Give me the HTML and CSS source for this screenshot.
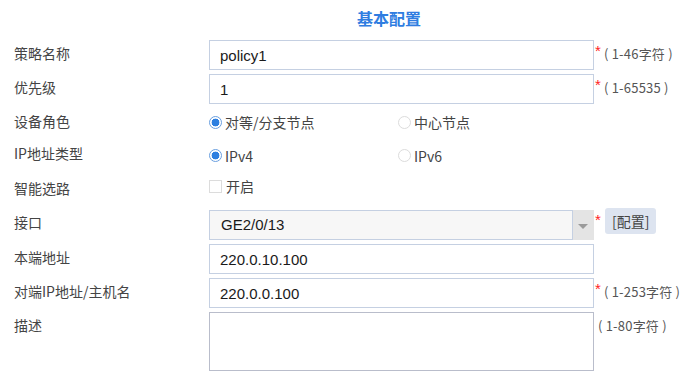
FILE: index.html
```html
<!DOCTYPE html>
<html lang="zh-CN">

<head>
  <meta charset="UTF-8">
  <title>基本配置</title>
  <link rel="stylesheet" href="styles.css">
</head>

<body>
  <h2 class="title">基本配置</h2>
  <div class="form">
    <div class="row">
      <div class="label">策略名称</div>
      <div class="field"><input class="text" type="text" value="policy1"></div>
      <span class="req">*</span><span class="hint">( 1-46字符 )</span>
    </div>
    <div class="row">
      <div class="label">优先级</div>
      <div class="field"><input class="text" type="text" value="1"></div>
      <span class="req">*</span><span class="hint">( 1-65535 )</span>
    </div>
    <div class="row row-radio">
      <div class="label">设备角色</div>
      <div class="field options">
        <label class="opt"><span class="radio on"></span>对等/分支节点</label>
        <label class="opt"><span class="radio"></span>中心节点</label>
      </div>
    </div>
    <div class="row row-radio tall">
      <div class="label">IP地址类型</div>
      <div class="field options">
        <label class="opt"><span class="radio on"></span>IPv4</label>
        <label class="opt"><span class="radio"></span>IPv6</label>
      </div>
    </div>
    <div class="row row-check">
      <div class="label">智能选路</div>
      <div class="field options">
        <label class="opt"><span class="check"></span>开启</label>
      </div>
    </div>
    <div class="row">
      <div class="label">接口</div>
      <div class="field">
        <div class="select">
          <span class="select-value">GE2/0/13</span>
          <span class="select-arrow"></span>
        </div>
      </div>
      <span class="req">*</span><button class="btn">[配置]</button>
    </div>
    <div class="row">
      <div class="label">本端地址</div>
      <div class="field"><input class="text" type="text" value="220.0.10.100"></div>
    </div>
    <div class="row">
      <div class="label">对端IP地址/主机名</div>
      <div class="field"><input class="text" type="text" value="220.0.0.100"></div>
      <span class="req">*</span><span class="hint">( 1-253字符 )</span>
    </div>
    <div class="row">
      <div class="label">描述</div>
      <div class="field"><textarea class="area"></textarea></div>
      <span class="hint hint-plain">( 1-80字符 )</span>
    </div>
  </div>
</body>

</html>
```

FILE: styles.css
```css
body {
  margin: 0;
  padding: 0 0 0 14px;
  font-family: "Noto Sans CJK SC", "Liberation Sans", sans-serif;
  font-size: 14px;
  color: #444;
  background: #fff;
}

.title {
  margin: 0;
  height: 40px;
  padding-left: 343px;
  font-size: 16px;
  font-weight: bold;
  line-height: 36px;
  color: #2f7de1;
}

.row {
  display: flex;
  align-items: flex-start;
  margin-bottom: 4px;
}

.label {
  width: 195px;
  padding-top: 3px;
  line-height: 20px;
  color: #444;
}

.field {
  width: 385px;
}

.text {
  box-sizing: border-box;
  width: 385px;
  height: 30px;
  margin: 0;
  padding: 0 10px;
  border: 1px solid #c5d0e2;
  font-family: "Liberation Sans", sans-serif;
  font-size: 15px;
  color: #1a1a1a;
  outline: none;
}

.area {
  display: block;
  box-sizing: border-box;
  width: 385px;
  height: 59px;
  margin: 0;
  border: 1px solid #b9bdcb;
  resize: none;
  outline: none;
}

.req {
  width: 9px;
  padding: 4px 0 0 1px;
  color: #f22;
  font-family: "Liberation Sans", sans-serif;
  font-size: 15px;
  line-height: 14px;
}

.hint {
  padding-top: 5px;
  font-size: 13px;
  line-height: 18px;
  letter-spacing: 0.2px;
  color: #555;
}

.hint-plain {
  padding-left: 4px;
}

/* radio / checkbox rows */
.row-radio {
  height: 28px;
  align-items: center;
}

.row-radio .label {
  align-self: flex-start;
  padding-top: 3px;
}

.row-radio.tall {
  height: 31px;
}

.row-check {
  height: 30px;
}

.options {
  display: flex;
  align-items: center;
}

.row-check .options {
  padding-top: 1px;
}

.opt {
  display: flex;
  align-items: center;
  width: 189px;
  line-height: 20px;
  color: #444;
}

.radio {
  box-sizing: border-box;
  width: 13px;
  height: 13px;
  margin-right: 3px;
  border: 1px solid #dcdcdc;
  border-radius: 50%;
  background: #fff;
}

.radio.on {
  border-color: #6a9fe0;
  background: radial-gradient(circle, #2d7fe0 0 3.6px, #fff 4.2px);
}

.check {
  box-sizing: border-box;
  width: 13px;
  height: 13px;
  margin-right: 4px;
  border: 1px solid #dcdcdc;
  background: #fff;
}

/* select */
.select {
  box-sizing: border-box;
  display: flex;
  width: 385px;
  height: 30px;
  margin-top: 1px;
  border: 1px solid #c5d0e2;
  background: #f7f7f7;
}

.select-value {
  flex: 1;
  padding-left: 11px;
  font-family: "Liberation Sans", sans-serif;
  font-size: 15px;
  line-height: 28px;
  color: #1a1a1a;
}

.select-arrow {
  position: relative;
  width: 21px;
  margin: -1px -1px -1px 0;
  border-left: 1px solid #c5d0e2;
  background: #e4e4e4;
}

.select-arrow::after {
  content: "";
  position: absolute;
  left: 5px;
  top: 14px;
  border-left: 5px solid transparent;
  border-right: 5px solid transparent;
  border-top: 5px solid #9a9a9a;
}

.btn {
  margin: -1px 0 0 1px;
  height: 26px;
  padding: 0 7px;
  border: none;
  border-radius: 3px;
  background: #dde4f0;
  font-family: "Noto Sans CJK SC", sans-serif;
  font-size: 14px;
  color: #444;
}
```
